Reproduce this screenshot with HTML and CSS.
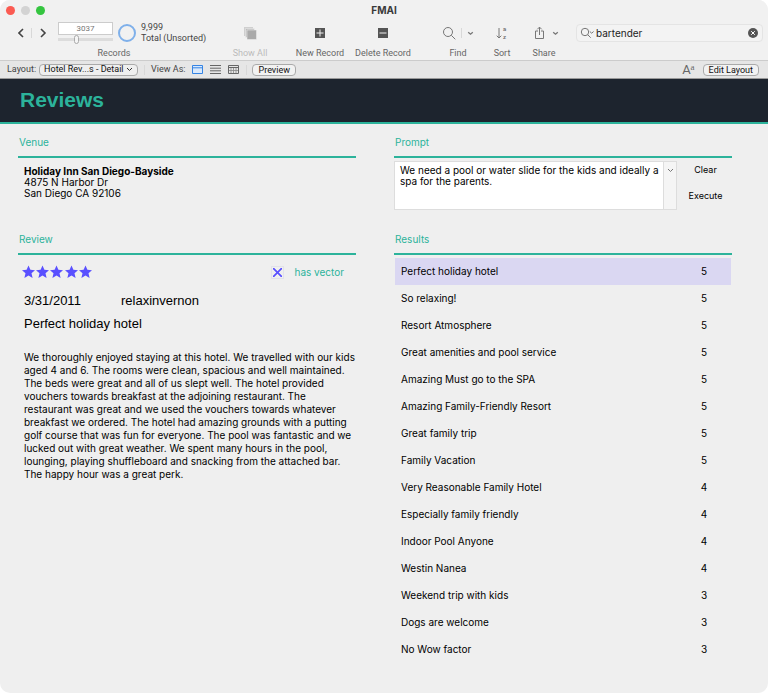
FILE: index.html
```html
<!DOCTYPE html>
<html lang="en">
<head>
    <meta charset="UTF-8">
    <meta name="viewport" content="width=device-width, initial-scale=1.0">
    <title>FMAI</title>
    <link rel="stylesheet" href="styles.css">
</head>
<body>
<div class="window">

    <header class="titlebar">
        <div class="lights"><span class="light red"></span><span class="light gray"></span><span class="light green"></span></div>
        <div class="title">FMAI</div>
    </header>

    <div class="toolbar">
        <div class="tool records">
            <div class="icons">
                <button type="button" class="nav" aria-label="Previous record"><svg width="7" height="10" viewBox="0 0 7 10"><path d="M5 1L1 5l4 4"/></svg></button>
                <span class="divider"></span>
                <button type="button" class="nav" aria-label="Next record"><svg width="7" height="10" viewBox="0 0 7 10"><path d="M1 1l4 4-4 4"/></svg></button>
                <div class="counter">
                    <input type="text" class="number" value="3037" aria-label="Record number">
                    <input type="range" class="slider" min="1" max="9999" value="3300" aria-label="Record">
                </div>
                <svg class="ring" width="20" height="20" viewBox="0 0 20 20"><circle cx="10" cy="10" r="8"/></svg>
                <div class="total">9,999<br>Total (Unsorted)</div>
            </div>
            <span class="label">Records</span>
        </div>

        <button type="button" class="tool show" disabled>
            <span class="icons"><svg width="14" height="14" viewBox="0 0 14 14"><path fill="#cfcfcf" d="M1 1h9v9H1z"/><path fill="#bdbdbd" stroke="#f1f1f1" stroke-width=".5" d="M2.500 2.500h9v9h-9z"/><path fill="#aaa" stroke="#f1f1f1" stroke-width=".5" d="M4 4h9.500v9.500H4z"/></svg></span>
            <span class="label">Show All</span>
        </button>
        <button type="button" class="tool new">
            <span class="icons"><svg width="12" height="12" viewBox="0 0 12 12"><path fill="#555" d="M1 1h10v10H1z"/><path stroke="#f1f1f1" d="M6 2.500v7M2.500 6h7"/></svg></span>
            <span class="label">New Record</span>
        </button>
        <button type="button" class="tool delete">
            <span class="icons"><svg width="12" height="12" viewBox="0 0 12 12"><path fill="#555" d="M1 1h10v10H1z"/><path stroke="#f1f1f1" d="M2.500 6h7"/></svg></span>
            <span class="label">Delete Record</span>
        </button>
        <button type="button" class="tool find">
            <span class="icons">
                <svg width="14" height="14" viewBox="0 0 14 14"><circle cx="6" cy="6" r="4.500" class="line"/><path class="line" d="M9.300 9.300l4 4"/></svg>
                <span class="divider"></span>
                <svg width="7" height="5" viewBox="0 0 7 5"><path class="line chev" d="M1.200 1.200l2.300 2 2.300-2"/></svg>
            </span>
            <span class="label">Find</span>
        </button>
        <button type="button" class="tool sort">
            <span class="icons"><svg width="12" height="14" viewBox="0 0 12 14"><path class="line" d="M3 2v10M.700 9.700L3 12l2.300-2.300"/><text x="7" y="5">a</text><text x="7" y="13">z</text></svg></span>
            <span class="label">Sort</span>
        </button>
        <button type="button" class="tool share">
            <span class="icons">
                <svg width="12" height="14" viewBox="0 0 12 14"><path class="line" d="M4 5H1.500v7.500h8V5H7M5.500 9V1.200M3.300 3.300l2.200-2.200 2.200 2.200"/></svg>
                <svg width="7" height="5" viewBox="0 0 7 5"><path class="line chev" d="M1.200 1.200l2.300 2 2.300-2"/></svg>
            </span>
            <span class="label">Share</span>
        </button>

        <div class="search">
            <svg width="15" height="12" viewBox="0 0 15 12"><circle cx="5" cy="5" r="3.700" class="line"/><path class="line" d="M7.700 7.700l3 3M9.800 4.500l1.900 1.700 1.900-1.700"/></svg>
            <input type="text" value="bartender" aria-label="Quick find">
            <button type="button" aria-label="Clear search"><svg width="10" height="10" viewBox="0 0 10 10"><circle cx="5" cy="5" r="5" fill="#555"/><path stroke="#fff" d="M3.200 3.200l3.600 3.600M6.800 3.200L3.200 6.800"/></svg></button>
        </div>
    </div>

    <div class="statusbar">
        <label for="layout">Layout:</label>
        <span class="pick">
            <select id="layout"><option>Hotel Rev...s - Detail</option></select>
            <svg width="7" height="5" viewBox="0 0 7 5"><path class="line dark" d="M1 1l2.500 2.500L6 1"/></svg>
        </span>
        <span class="divider"></span>
        <span class="viewas">View As:</span>
        <button type="button" class="view" aria-label="Form"><svg width="11" height="9" viewBox="0 0 11 9"><path fill="#d9e9fc" stroke="#3584e4" d="M.500.500h10v8H.500zM.500 2.800h10"/></svg></button>
        <button type="button" class="view" aria-label="List"><svg width="11" height="9" viewBox="0 0 11 9"><path stroke="#666" d="M0 .500h11M0 3.200h11M0 5.800h11M0 8.500h11"/></svg></button>
        <button type="button" class="view" aria-label="Table"><svg width="11" height="9" viewBox="0 0 11 9"><path fill="none" stroke="#666" d="M.500.500h10v8H.500z"/><path stroke="#666" d="M0 2.500h11"/><path stroke="#888" stroke-width=".8" d="M1 5.500h9M3 3v5M5.500 3v5M8 3v5"/></svg></button>
        <span class="divider"></span>
        <button type="button" class="push">Preview</button>
        <span class="format">A<sup>a</sup></span>
        <button type="button" class="push">Edit Layout</button>
    </div>

    <h1>Reviews</h1>

    <main>
        <section class="venue">
            <h2>Venue</h2>
            <address><strong>Holiday Inn San Diego-Bayside</strong><br>4875 N Harbor Dr<br>San Diego CA 92106</address>
        </section>

        <section class="prompt">
            <h2><label for="prompt">Prompt</label></h2>
            <div class="promptrow">
                <div class="combo">
                    <textarea id="prompt">We need a pool or water slide for the kids and ideally a
spa for the parents.</textarea>
                    <button type="button" aria-label="Show prompts"><svg width="7" height="5" viewBox="0 0 7 5"><path class="line" d="M1 1l2.500 2.500L6 1"/></svg></button>
                </div>
                <div class="actions">
                    <button type="button">Clear</button>
                    <button type="button">Execute</button>
                </div>
            </div>
        </section>

        <section class="review">
            <h2>Review</h2>
            <div class="rating">
                <svg width="72" height="14" viewBox="0 0 72 14" role="img" aria-label="5 stars">
                    <defs><path id="star" d="M6.500 .500l1.900 4.300 4.600.400-3.500 3.100 1.100 4.700-4.100-2.400L2.400 13l1.100-4.700L0 5.200l4.600-.400z"/></defs>
                    <g fill="#5a50ff">
                        <use href="#star"/><use href="#star" x="14"/><use href="#star" x="28"/><use href="#star" x="43"/><use href="#star" x="57"/>
                    </g>
                </svg>
                <label class="vector"><input type="checkbox" checked> has vector</label>
            </div>
            <div class="meta"><span class="date">3/31/2011</span><span>relaxinvernon</span></div>
            <h3>Perfect holiday hotel</h3>
            <p>We thoroughly enjoyed staying at this hotel. We travelled with our kids<br>
            aged 4 and 6. The rooms were clean, spacious and well maintained.<br>
            The beds were great and all of us slept well. The hotel provided<br>
            vouchers towards breakfast at the adjoining restaurant. The<br>
            restaurant was great and we used the vouchers towards whatever<br>
            breakfast we ordered. The hotel had amazing grounds with a putting<br>
            golf course that was fun for everyone. The pool was fantastic and we<br>
            lucked out with great weather. We spent many hours in the pool,<br>
            lounging, playing shuffleboard and snacking from the attached bar.<br>
            The happy hour was a great perk.</p>
        </section>

        <section class="results">
            <h2>Results</h2>
            <table>
                <tr class="selected"><td>Perfect holiday hotel</td><td>5</td></tr>
                <tr><td>So relaxing!</td><td>5</td></tr>
                <tr><td>Resort Atmosphere</td><td>5</td></tr>
                <tr><td>Great amenities and pool service</td><td>5</td></tr>
                <tr><td>Amazing Must go to the SPA</td><td>5</td></tr>
                <tr><td>Amazing Family-Friendly Resort</td><td>5</td></tr>
                <tr><td>Great family trip</td><td>5</td></tr>
                <tr><td>Family Vacation</td><td>5</td></tr>
                <tr><td>Very Reasonable Family Hotel</td><td>4</td></tr>
                <tr><td>Especially family friendly</td><td>4</td></tr>
                <tr><td>Indoor Pool Anyone</td><td>4</td></tr>
                <tr><td>Westin Nanea</td><td>4</td></tr>
                <tr><td>Weekend trip with kids</td><td>3</td></tr>
                <tr><td>Dogs are welcome</td><td>3</td></tr>
                <tr><td>No Wow factor</td><td>3</td></tr>
            </table>
        </section>
    </main>

</div>
</body>
</html>
```
FILE: styles.css
```css
* { box-sizing: border-box; }
body { margin: 0; background: #fff; color: #000; font-family: Inter, Helvetica, sans-serif; font-size: 10px; line-height: 11px; }
button, input, select, textarea { font: inherit; color: inherit; margin: 0; padding: 0; border: none; background: none; outline: none; }
svg { display: block; flex: none; }
.window { min-height: 100vh; background: #efefef; border-radius: 10px; overflow: hidden; }
.line { fill: none; stroke: #777; stroke-width: 1; }
.chev { stroke-width: 1.3; }
.dark { stroke: #333; }

/* title bar */
.toolbar, .statusbar { font-family: Roboto, sans-serif; font-size: 9px; }
.titlebar { display: grid; grid-template-columns: 1fr auto 1fr; align-items: center; height: 20px; background: #f1f1f1; }
.lights { display: flex; gap: 6px; padding-left: 6px; }
.light { width: 9px; height: 9px; border-radius: 50%; }
.red { background: #fb5b52; }
.gray { background: #d3d3d3; }
.green { background: #35c540; }
.title { font-weight: 700; color: #3a3a3a; }

/* toolbar */
.toolbar { display: flex; height: 41px; padding: 0 5px 0 18px; background: #f1f1f1; border-bottom: 1px solid #ccc; color: #666; }
.tool { display: flex; flex-direction: column; align-items: center; flex: none; }
.icons { display: flex; align-items: center; justify-content: center; height: 26px; }
.label { line-height: 14px; white-space: nowrap; }
.divider { width: 1px; height: 10px; background: #d8d8d8; }
.records { width: 192px; }
.records .icons { width: 100%; justify-content: flex-start; }
.nav { width: 8px; }
.nav path { fill: none; stroke: #444; stroke-width: 1.6; }
.records .divider { margin: 0 8px 0 5px; }
.counter { display: flex; flex-direction: column; width: 55px; margin-left: 10px; }
.number { width: 100%; height: 13px; border: 1px solid #ccc; background: #fff; font-size: 8px; text-align: center; color: #777; }
.slider { appearance: none; width: 100%; height: 9px; }
.slider::-webkit-slider-runnable-track { height: 3px; background: #dcdcdc; }
.slider::-webkit-slider-thumb { appearance: none; width: 5px; height: 9px; margin-top: -3px; border: 1px solid #aaa; border-radius: 3px; background: #f5f5f5; }
.ring { margin-left: 4px; fill: none; stroke: #7fb0ea; stroke-width: 2; }
.total { margin-left: 4px; line-height: 11px; color: #444; white-space: nowrap; }
.show { width: 80px; color: #bbb; }
.new { width: 60px; }
.delete { width: 66px; }
.find { width: 48px; margin-left: 18px; }
.find .icons { gap: 5px; }
.sort { width: 40px; }
.sort text { font-size: 6px; font-weight: 700; fill: #777; }
.share { width: 44px; }
.share .icons { gap: 6px; padding-left: 4px; }
.search { display: flex; align-items: center; flex: 1; min-width: 0; height: 18px; margin: 4px 0 0 10px; padding: 0 4px 0 3px; border: 1px solid #e4e4e4; border-radius: 4px; background: #f3f3f3; }
.search input { flex: 1; min-width: 0; margin-left: 1px; font-family: Inter, sans-serif; font-size: 10px; color: #222; }

/* layout bar */
.statusbar { display: flex; align-items: center; height: 18px; padding: 0 9px 0 7px; background: #e6e6e6; border-bottom: 1px solid #999; color: #444; }
.pick { display: flex; align-items: center; width: 99px; height: 12px; margin: 0 6px 0 3px; padding: 0 4px 0 4px; border: 1px solid #aaa; border-radius: 4px; background: #efefef; color: #111; }
.pick select { appearance: none; flex: 1; min-width: 0; }
.viewas { margin: 0 7px 0 6px; white-space: nowrap; }
.view { margin-right: 7px; }
.push { height: 12px; padding: 0 5px; border: 1px solid #aaa; border-radius: 4px; background: #f2f2f2; color: #111; line-height: 10px; white-space: nowrap; }
.statusbar .divider + .push { margin-left: 5px; }
.format { display: flex; margin: 0 8px 0 auto; font-size: 13px; line-height: 14px; color: #666; }
.format sup { font-family: "Liberation Serif", serif; font-size: 9px; line-height: 8px; }

/* form */
h1 { margin: 0; height: 45px; padding-left: 20px; background: #1d242e; border-bottom: 2px solid #2cb39b; color: #2cb39b; font-family: "Liberation Sans", Arial, sans-serif; font-size: 21px; line-height: 42px; }
main { display: grid; grid-template-columns: repeat(2, minmax(0, 1fr)); grid-template-rows: 97px auto; column-gap: 38px; padding: 9px 36px 0 18px; }
h2 { height: 25px; margin: 0; padding-left: 1px; border-bottom: 2px solid #2cb39b; color: #2cb39b; font-size: 10px; font-weight: 400; line-height: 18px; }
address { padding: 8px 6px 0; font-style: normal; }
.promptrow { display: flex; margin-top: 3px; }
.combo { display: flex; flex: 1; height: 49px; border: 1px solid #ddd; background: #fff; }
.combo textarea { flex: 1; min-width: 0; padding: 3px 0 0 5px; resize: none; overflow: hidden; white-space: pre; }
.combo button { display: flex; justify-content: center; width: 13px; padding-top: 6px; border-left: 1px solid #ddd; background: #f5f5f5; }
.actions { display: flex; flex-direction: column; align-items: center; gap: 14px; width: 55px; padding: 3px 0 0 2px; }
.actions button { height: 12px; font-size: 9px; line-height: 12px; }
.rating { display: flex; align-items: center; justify-content: space-between; height: 34px; padding: 0 12px 0 4px; }
.vector { display: flex; align-items: center; gap: 10px; color: #2cb39b; }
.vector input { appearance: none; width: 13px; height: 13px; padding: 1px; border: 1px solid #e2e2ea; }
.vector input:checked { background: linear-gradient(45deg, transparent 43%, #5a50ff 45% 55%, transparent 57%) content-box, linear-gradient(-45deg, transparent 43%, #5a50ff 45% 55%, transparent 57%) content-box; }
.meta, h3 { margin: 0; padding-left: 6px; font-family: "Liberation Sans", Arial, sans-serif; font-size: 13px; font-weight: 400; line-height: 23px; }
.meta { display: flex; }
.date { width: 97px; }
.review p { margin: 16px 0 0; padding-left: 6px; line-height: 13px; white-space: nowrap; }
table { width: calc(100% - 2px); margin: 3px 1px 0; border-collapse: collapse; }
td { height: 27px; padding: 0 6px; }
td:last-child { width: 54px; text-align: center; }
.selected { background: #dad7f2; }
```
